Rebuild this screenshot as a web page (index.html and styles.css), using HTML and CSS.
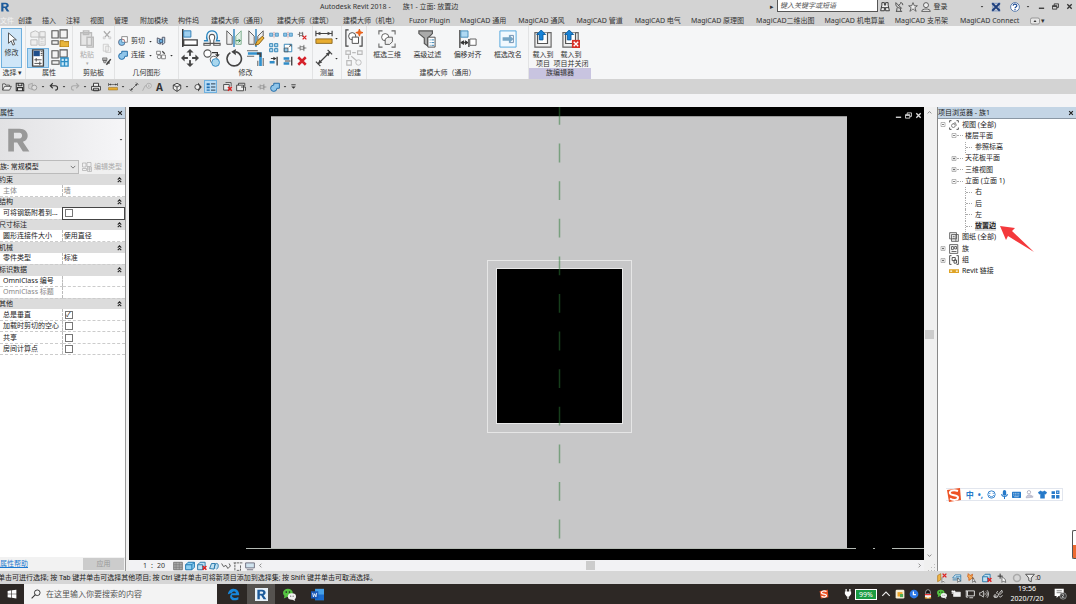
FILE: index.html
```html
<!DOCTYPE html>
<html>

  <head>
    <meta charset="utf-8">
    <title>Autodesk Revit 2018 - 族1 - 立面: 放置边</title>
    <link rel="stylesheet" href="styles.css">
  </head>

  <body>

    <!-- ******* Symbole ************************ -->
    <svg class="defs" aria-hidden="true">
      <symbol id="caret" viewBox="0 0 16 16"><path d="M4 6h8l-4 5z" fill="#333"/></symbol>
      <symbol id="down" viewBox="0 0 16 16"><path d="M2 5l6 6 6-6" fill="none" stroke="#555" stroke-width="2"/></symbol>
      <symbol id="close" viewBox="0 0 16 16"><path d="M3 3l10 10M13 3L3 13" fill="none" stroke="currentColor" stroke-width="3"/></symbol>
      <symbol id="restore" viewBox="0 0 16 16"><path d="M5 6V2h10v8h-4M1 6h10v8H1zM1 8h10" fill="none" stroke="currentColor" stroke-width="2"/></symbol>
      <symbol id="mini" viewBox="0 0 16 16"><path d="M2 12h12" stroke="currentColor" stroke-width="3"/></symbol>
      <symbol id="rlogo" viewBox="0 0 16 16"><path fill-rule="evenodd" d="M2 1h7c6 0 6.500 7 2 8l4 6h-4L7.500 9.500H5.500V15H2zM5.500 3.500v3.500H9c2 0 2-3.500 0-3.500z" fill="currentColor"/></symbol>

      <symbol id="cursor" viewBox="0 0 16 16"><path d="M4 1v12l3-3 2 5 2-1-2-5h4z" fill="#fff" stroke="#444"/></symbol>
      <symbol id="types" viewBox="0 0 20 20"><path d="M2 4l5-2 4 2v5H2zM12 3h6v6h-6zM2 12h7v6H2zM11 9h7v9h-7zM13 11h3M13 14h1M15 14h1M13 16h1M15 16h1" fill="#eee" stroke="#bbb"/></symbol>
      <symbol id="props" viewBox="0 0 20 20"><path d="M4 1h12v18H4z" fill="#fff" stroke="#444" stroke-width="1.500"/><path d="M5 2h7v6H5z" fill="#1e4f8c"/><path d="M13 3h2M13 5h2M13 7h2M6 12h8M6 16h8M8 10v4M12 14v4" stroke="#444"/></symbol>
      <symbol id="famtype" viewBox="0 0 20 20"><path d="M1 2h7v8H1zM10 1h8v9h-8zM1 13h7v4H1z" fill="#f3f3f3" stroke="#555" stroke-width="1.200"/><path d="M10 13h4l1 1h5v6H10z" fill="#e8b53c" stroke="#a87510"/></symbol>
      <symbol id="famcat" viewBox="0 0 20 20"><path d="M1 2h7v8H1zM10 1h8v8h-8zM1 13h8v4H1z" fill="#f3f3f3" stroke="#555" stroke-width="1.200"/><path d="M11 10h8v9h-8zM15 10v9M11 14h8" fill="#c9e8f7" stroke="#2b8cc4" stroke-width="1.500"/></symbol>
      <symbol id="paste" viewBox="0 0 20 20"><path d="M3 3h12v14H3zM6 1h6v4H6zM10 8h7v11h-7z" fill="#e6e6e6" stroke="#bbb" stroke-width="1.500"/></symbol>
      <symbol id="cut" viewBox="0 0 16 16"><path d="M3 2l8 9M13 2l-8 9" stroke="#aaa" stroke-width="2"/><path d="M2 11h3v3H2zM11 11h3v3h-3z" fill="none" stroke="#bbb"/></symbol>
      <symbol id="copy" viewBox="0 0 16 16"><path d="M2 2h8v11H2zM6 5h5l3 3v7H6z" fill="#f4f4f4" stroke="#bbb"/></symbol>
      <symbol id="brush" viewBox="0 0 16 16"><path d="M1 3h7v4H1zM2 7h5l-1 4H3z" fill="#bbb" stroke="#555"/><path d="M7 14l7-9M9 9l3 3" stroke="#444" stroke-width="2.500" fill="none"/></symbol>
      <symbol id="gcut" viewBox="0 0 16 16"><path d="M6 1h9v9h-5V6H6z" fill="#fff" stroke="#555"/><circle cx="6" cy="10" r="5" fill="#fff" stroke="#a44"/><path d="M6 5v5h5a5 5 0 1 1-5-5z" fill="#8fc5ea" stroke="#26638f"/></symbol>
      <symbol id="gjoin" viewBox="0 0 16 16"><path d="M6 2h9v8h-4a5 5 0 1 1-5-5z" fill="#8fc5ea" stroke="#1f6aa5" stroke-width="1.500"/></symbol>
      <symbol id="cope" viewBox="0 0 16 16"><path d="M2 3l5 2v8l-5-2zM10 2h4v9l-4 3z" fill="#b9dcf2" stroke="#445" stroke-width="1.300"/><circle cx="8" cy="8" r="3" fill="#6aaede" stroke="#235"/></symbol>
      <symbol id="demolish" viewBox="0 0 16 16"><path d="M1 2h6v5H1zM9 8h6v6H9z" fill="#fff" stroke="#444"/><circle cx="5" cy="11" r="3" fill="none" stroke="#444"/><path d="M10 2l4 4" stroke="#444" stroke-width="2"/></symbol>
      <symbol id="align" viewBox="0 0 20 20"><path d="M2 0v20" stroke="#222" stroke-width="1.500"/><path d="M3 2h8v7H3z" fill="#9fd0ef" stroke="#2b7cb4"/><path d="M3 12h15v6H3z" fill="#fff" stroke="#444" stroke-width="1.500"/></symbol>
      <symbol id="offset" viewBox="0 0 20 20"><path d="M1 13h4c-2-4-1-11 5-11s7 7 5 11h4" fill="none" stroke="#2b86c0" stroke-width="1.500"/><path d="M1 18h7v-5c-2-4-1-7 2-7s4 3 2 7v5h7v-2H1z" fill="#fff" stroke="#555" stroke-width="1.200"/></symbol>
      <symbol id="mirror1" viewBox="0 0 20 20"><path d="M2 2l6 6v9H2z" fill="#eee" stroke="#555"/><path d="M18 2l-6 6v9h6z" fill="#e4f2e9" stroke="#7a8"/><path d="M10 0v20" stroke="#227bb8" stroke-width="1.500"/><path d="M12 13h5M15 11l2 2-2 2" fill="none" stroke="#2a7a44"/></symbol>
      <symbol id="mirror2" viewBox="0 0 20 20"><path d="M2 2l6 6v9H2zM18 2l-6 6v5l6-5z" fill="#eee" stroke="#555"/><path d="M10 0v20" stroke="#227bb8" stroke-width="1.500"/><path d="M9 18l2-4 6-6 2 2-6 7z" fill="#ecb43a" stroke="#865a10"/></symbol>
      <symbol id="move" viewBox="0 0 20 20"><path d="M10 0l4 4h-3v5h5V6l4 4-4 4v-3h-5v5h3l-4 4-4-4h3v-5H4v3l-4-4 4-4v3h5V4H6z" fill="#444"/><circle cx="10" cy="10" r="2.500" fill="#f5f6f7"/></symbol>
      <symbol id="copyto" viewBox="0 0 20 20"><circle cx="5" cy="5" r="4" fill="#fff" stroke="#555" stroke-width="1.200"/><path d="M10 4h6v3M14 6l2 2 2-2" fill="none" stroke="#333" stroke-width="1.300"/><circle cx="12" cy="12" r="4" fill="#fff" stroke="#555"/><circle cx="14" cy="15" r="4.300" fill="#a9d7ee" stroke="#2b86c0"/></symbol>
      <symbol id="rotate" viewBox="0 0 20 20"><path d="M6 4a8 8 0 1 0 6-1" fill="none" stroke="#444" stroke-width="1.800"/><path d="M12 0v7L7 3z" fill="#444"/></symbol>
      <symbol id="trim" viewBox="0 0 20 20"><path d="M0 2h12M0 8h8M12 13v6M18 10v9" fill="none" stroke="#666" stroke-width="1.200"/><path d="M1 5h14v14" fill="none" stroke="#3192cf" stroke-width="3"/><path d="M11 5h4v4" fill="none" stroke="#444" stroke-width="2"/></symbol>
      <symbol id="split" viewBox="0 0 16 16"><path d="M1 5h5v5H1zM10 5h5v5h-5z" fill="#8cc6ea" stroke="#2277ad"/><path d="M8 3v10" stroke="#c77" stroke-width="1.300" stroke-dasharray="2 1"/></symbol>
      <symbol id="array" viewBox="0 0 16 16"><path d="M1 1h5v5H1zM9 1h5v5H9zM1 9h5v5H1zM9 9h5v5H9z" fill="#b5dcf3" stroke="#3083b5" stroke-width="1.500"/></symbol>
      <symbol id="scale" viewBox="0 0 16 16"><path d="M2 2h12v12H2z" fill="#fff" stroke="#3083b5" stroke-width="1.500"/><path d="M2 8h6v6H2z" fill="#8cc6ea" stroke="#333"/><path d="M9 7l4-4M10 3h3v3" stroke="#333" fill="none"/></symbol>
      <symbol id="extend" viewBox="0 0 16 16"><path d="M13 1v14" stroke="#333" stroke-width="2"/><path d="M1 10h8" stroke="#2f8cc8" stroke-width="4"/><path d="M3 4h5" stroke="#333" stroke-width="1.500"/><path d="M7 1l5 3-5 3z" fill="#333"/></symbol>
      <symbol id="extend2" viewBox="0 0 16 16"><path d="M14 1v14" stroke="#333" stroke-width="2"/><path d="M1 4h9M1 12h9" stroke="#2f8cc8" stroke-width="4"/><path d="M3 8h9" stroke="#333" stroke-width="1.500"/></symbol>
      <symbol id="pin" viewBox="0 0 16 16"><path d="M1 8h4M5 4v8M5 6h6v4H5M11 3v10M11 8h4" fill="none" stroke="#666" stroke-width="1.300"/></symbol>
      <symbol id="unpin" viewBox="0 0 16 16"><path d="M1 7h3M4 3v8M4 5h5v4H4M9 3v8" fill="none" stroke="#666" stroke-width="1.300"/><path d="M9 9l6 6M15 9l-6 6" stroke="#d22" stroke-width="2"/></symbol>
      <symbol id="del" viewBox="0 0 16 16"><path d="M2 2l12 12M14 2L2 14" stroke="#d5222b" stroke-width="4"/></symbol>
      <symbol id="meas" viewBox="0 0 20 20"><path d="M1 5h18M1 2v6M19 2v6" stroke="#444" stroke-width="1.300"/><path d="M2 5l4-2v4zM18 5l-4-2v4z" fill="#444"/><path d="M1 11h18v5H1z" fill="#e8ac2f" stroke="#8c681f"/></symbol>
      <symbol id="dim" viewBox="0 0 20 20"><path d="M3 17L17 3M1 14l5 5M14 1l5 5" stroke="#444" stroke-width="1.400"/><path d="M3 17l2-5 3 3zM17 3l-2 5-3-3z" fill="#444"/></symbol>
      <symbol id="create" viewBox="0 0 20 20"><path d="M4 1H1v18h3M16 19h3V8" fill="none" stroke="#444" stroke-width="1.300"/><circle cx="8" cy="8" r="4" fill="#fff" stroke="#444"/><path d="M8 9h7v7H8z" fill="#fff" stroke="#444"/><path d="M16 0l1 3 3 1-3 1-1 3-1-3-3-1 3-1z" fill="#f06a1d" stroke="#e55812"/></symbol>
      <symbol id="creategrp" viewBox="0 0 20 20"><path d="M1 2h5v4H1zM14 2h5v4h-5zM2 13h5v5H2zM8 4h4M4 7v4M7 8l6 5" fill="none" stroke="#bbb" stroke-width="1.300"/><circle cx="15" cy="15" r="3" fill="none" stroke="#bbb"/></symbol>
      <symbol id="box3d" viewBox="0 0 20 20"><path d="M1 5V1h4M15 1h4v4M19 15v4h-4M5 19H1v-4" fill="none" stroke="#666" stroke-width="1.200"/><circle cx="8" cy="8" r="4" fill="#fff" stroke="#555"/><path d="M8 10l3-2h5v5l-3 3H8z" fill="#eee" stroke="#555"/></symbol>
      <symbol id="filter" viewBox="0 0 20 20"><path d="M1 1h15v3l-5 5v9l-4-3V9L1 4z" fill="#aaa" stroke="#555" stroke-width="1.300"/><path d="M11 8h8v11h-8z" fill="#fff" stroke="#444"/><path d="M13 11h1M15 11h3M13 14h1M15 14h3M13 17h1M15 17h3" stroke="#2677ab"/></symbol>
      <symbol id="shift" viewBox="0 0 20 20"><path d="M1 0v20M11 10v9" stroke="#333" stroke-width="1.400"/><path d="M2 1h8v7H2z" fill="#afd9f3" stroke="#3d88b7"/><path d="M12 10h7v7h-7z" fill="#fff" stroke="#555"/><path d="M2 14h8M2 14l3-2v4zM10 14l-3-2v4z" stroke="#333" fill="#333"/></symbol>
      <symbol id="rename" viewBox="0 0 20 20"><path d="M1 1h18v18H1z" fill="#f2f9fe" stroke="#4aa3dc"/><path d="M4 8h7V5l5 5-5 5v-3H4z" fill="#76a5c5"/><path d="M12 6h4v8h-4" fill="none" stroke="#68a"/></symbol>
      <symbol id="load" viewBox="0 0 20 20"><path d="M1 3h18v16H1z" fill="#eee" stroke="#666" stroke-width="1.300"/><path d="M4 3v12h11V3" fill="#fff" stroke="#555" stroke-width="1.300"/><path d="M8 0l5 5h-3v6H6V5H3z" fill="#1783d8" stroke="#0b5c9e"/></symbol>
      <symbol id="loadx" viewBox="0 0 20 20"><path d="M1 3h17v16H1z" fill="#eee" stroke="#666" stroke-width="1.300"/><path d="M4 3v12h11V3" fill="#fff" stroke="#555" stroke-width="1.300"/><path d="M8 0l5 5h-3v6H6V5H3z" fill="#1783d8" stroke="#0b5c9e"/><path d="M11 11h9v9h-9z" fill="#d63027"/><path d="M13 13l5 5M18 13l-5 5" stroke="#fff" stroke-width="1.500"/></symbol>

      <symbol id="open" viewBox="0 0 16 16"><path d="M1 13V3h4l1 2h6v2M1 13l3-6h11l-3 6z" fill="#eee" stroke="#444" stroke-width="1.300"/></symbol>
      <symbol id="save" viewBox="0 0 16 16"><path d="M2 2h11l1 2v10H2zM5 2v4h6V2M4 14V9h8v5" fill="#eee" stroke="#333" stroke-width="1.700"/></symbol>
      <symbol id="sync" viewBox="0 0 16 16"><path d="M1 4l6-2v10l-6-2z" fill="#ccc" stroke="#999"/><circle cx="10" cy="9" r="4" fill="#ddd" stroke="#999" stroke-width="1.500"/></symbol>
      <symbol id="undo" viewBox="0 0 16 16"><path d="M6 2L2 6l4 4M2 6h8c5 0 5 7 0 7" fill="none" stroke="currentColor" stroke-width="1.700"/></symbol>
      <symbol id="redo" viewBox="0 0 16 16"><path d="M10 2l4 4-4 4M14 6H6c-5 0-5 7 0 7" fill="none" stroke="currentColor" stroke-width="1.700"/></symbol>
      <symbol id="print" viewBox="0 0 16 16"><path d="M4 7V2h8v5M1 7h14v6H1zM4 10h8v4H4z" fill="#f3f3f3" stroke="#333" stroke-width="1.500"/></symbol>
      <symbol id="tag" viewBox="0 0 16 16"><path d="M1 14l4-8h4" fill="none" stroke="#999"/><circle cx="11" cy="6" r="4" fill="#ddd" stroke="#999"/><path d="M11 4v4" stroke="#888"/></symbol>
      <symbol id="house" viewBox="0 0 16 16"><path d="M2 5l6-3 6 3v6l-6 4-6-4zM8 8v7M2 5l6 3 6-3" fill="#eee" stroke="#333" stroke-width="1.400"/></symbol>
      <symbol id="section" viewBox="0 0 16 16"><path d="M8 1l6 7-6 7" fill="#333"/><circle cx="7" cy="8" r="4" fill="#eee" stroke="#333" stroke-width="1.300"/></symbol>
      <symbol id="thin" viewBox="0 0 16 16"><path d="M1 2h5v3H1zM1 7h5v3H1zM1 12h5v2H1z" fill="#1f6fb2"/><path d="M8 3h7M8 8h7M8 13h7" stroke="#234" stroke-width="1.500"/></symbol>
      <symbol id="closewin" viewBox="0 0 16 16"><path d="M4 1h9v6M1 4h9v9H1z" fill="#eee" stroke="#444" stroke-width="1.400"/><path d="M8 8l6 6M14 8l-6 6" stroke="#d22" stroke-width="2.300"/></symbol>
      <symbol id="wins" viewBox="0 0 16 16"><path d="M4 5V2h10v5M1 5h11v9H1zM8 8h7v6" fill="#eee" stroke="#444" stroke-width="1.500"/></symbol>
      <symbol id="custom" viewBox="0 0 16 16"><path d="M3 4h10" stroke="#333" stroke-width="2"/><path d="M3 8h10l-5 5z" fill="#333"/></symbol>

      <symbol id="bino" viewBox="0 0 16 16"><path d="M3 1h4v4l2 0V1h4v4l2 9H9V9H7v5H1l2-9zM2 9h5M9 9h5" fill="#eee" stroke="#333" stroke-width="1.500"/></symbol>
      <symbol id="dish" viewBox="0 0 16 16"><path d="M3 1c-1 6 3 9 9 9zM7 6l4-4M3 15h10M5 9l-1 6M10 10l1 5M10 1c3 0 4 1 4 4" fill="none" stroke="#444" stroke-width="1.400"/></symbol>
      <symbol id="star" viewBox="0 0 16 16"><path d="M8 1l2 5h5l-4 3 2 6-5-4-5 4 2-6-4-3h5z" fill="#eee" stroke="#444" stroke-width="1.200"/></symbol>
      <symbol id="person" viewBox="0 0 16 16"><circle cx="8" cy="5" r="4" fill="#eee" stroke="#444" stroke-width="1.300"/><path d="M1 15c0-5 14-5 14 0z" fill="#eee" stroke="#444" stroke-width="1.300"/></symbol>
      <symbol id="exch" viewBox="0 0 16 16"><path d="M1 2h14M1 14h14M3 2v12M13 2v12" stroke="#8fa4c8" stroke-width="2"/><path d="M2 2l12 12M14 2L2 14" stroke="#1e3f7c" stroke-width="3"/></symbol>
      <symbol id="help" viewBox="0 0 16 16"><circle cx="8" cy="8" r="7" fill="#fff" stroke="#335e9c" stroke-width="1.200"/><path d="M5 6c0-4 6-3 6 0 0 2-3 2-3 4M8 11v2" fill="none" stroke="#1d4b94" stroke-width="1.800"/></symbol>
      <symbol id="min" viewBox="0 0 20 16"><rect x="1" y="2" width="18" height="12" rx="3" fill="#e6e6e6" stroke="#555"/><path d="M7 10l3-4 3 4z" fill="#333"/></symbol>

      <symbol id="views" viewBox="0 0 16 16"><path d="M1 4V1h3M12 1h3v3M15 12v3h-3M4 15H1v-3" fill="none" stroke="#444" stroke-width="1.400"/><circle cx="7" cy="9" r="3" fill="none" stroke="#444"/><path d="M7 6l3-2 2 5" fill="none" stroke="#444"/></symbol>
      <symbol id="sheets" viewBox="0 0 16 16"><path d="M1 1h11v10H1zM4 4h11v11H4zM11 4v11M6 7h3M6 10h3" fill="#eee" stroke="#555" stroke-width="1.300"/></symbol>
      <symbol id="fam" viewBox="0 0 16 16"><path d="M1 1h13v14H1zM4 4h3v5H4zM9 4h3v4H9zM4 12h8" fill="#fff" stroke="#555" stroke-width="1.400"/></symbol>
      <symbol id="grp" viewBox="0 0 16 16"><path d="M4 1H1v14h3M12 1h3v14h-3M5 4h5v5H5zM8 8h4v5H8z" fill="none" stroke="#444" stroke-width="1.400"/></symbol>
      <symbol id="link" viewBox="0 0 16 16"><path d="M1 6h6v4H1zM9 6h6v4H9zM5 8h6" fill="none" stroke="#dfa425" stroke-width="2"/></symbol>
      <symbol id="plus" viewBox="0 0 9 9"><path d="M1.500 1.500h6v6h-6z" fill="#fff" stroke="#999"/><path d="M3 4.500h3M4.500 3v3" stroke="#444"/></symbol>
      <symbol id="minus" viewBox="0 0 9 9"><path d="M1.500 1.500h6v6h-6z" fill="#fff" stroke="#999"/><path d="M3 4.500h3" stroke="#444"/></symbol>
      <symbol id="collapse" viewBox="0 0 16 16"><path d="M4 7l4-4 4 4M4 13l4-4 4 4" fill="none" stroke="#222" stroke-width="2.500"/></symbol>

      <symbol id="detail" viewBox="0 0 16 16"><path d="M1 2h14v12H1z" fill="#aaa" stroke="#555"/><path d="M1 6h14M1 10h14M5 2v12M10 2v12" stroke="#777"/></symbol>
      <symbol id="cube" viewBox="0 0 16 16"><path d="M1 6l4-4h10v8l-4 4H1zM1 6h10v8M11 6l4-4" fill="#8fd0f2" stroke="#1b75b0" stroke-width="1.500"/></symbol>
      <symbol id="cubex" viewBox="0 0 16 16"><path d="M1 6l4-4h8v8l-4 4H1zM1 6h8v8" fill="#bfe0f2" stroke="#2878aa" stroke-width="1.500"/><path d="M9 8l6 6M15 8l-6 6" stroke="#d22" stroke-width="2.500"/></symbol>
      <symbol id="shadow" viewBox="0 0 16 16"><path d="M1 12l3-8h6l-2 9zM9 12c-1-4 1-9 4-8s2 8-1 9" fill="#bfe0f2" stroke="#2878aa" stroke-width="1.500"/></symbol>
      <symbol id="glasses" viewBox="0 0 16 16"><path d="M1 4l3 5 4-2 3 5 4-4-2-4" fill="none" stroke="#555" stroke-width="1.500"/></symbol>
      <symbol id="crop" viewBox="0 0 16 16"><path d="M3 15V3h12M1 3h2M12 7v8H5" fill="none" stroke="#555" stroke-width="1.400" stroke-dasharray="4 1"/></symbol>
      <symbol id="screen" viewBox="0 0 16 16"><path d="M1 3h14v8H1zM3 14h10" fill="#cfe2ee" stroke="#667" stroke-width="1.400"/></symbol>
      <symbol id="selx" viewBox="0 0 16 16"><path d="M1 4l5-3v10l-5 3z" fill="#f0b646" stroke="#a66f13"/><path d="M8 7v8l2-2 2 2" fill="#fff" stroke="#444"/><path d="M9 1l6 6M15 1L9 7" stroke="#d22" stroke-width="2.200"/></symbol>
      <symbol id="sel2" viewBox="0 0 16 16"><path d="M1 8l4-5h9v10h-3V8H1zM6 6h8M1 11h8" fill="#e2f1fa" stroke="#2878aa" stroke-width="1.300"/><path d="M9 8v7l2-2h3z" fill="#fff" stroke="#444"/></symbol>
      <symbol id="sel3" viewBox="0 0 16 16"><path d="M2 1l3 3 4-2-1 4 3 3H7l-4 3V8L1 6z" fill="#f4aa57" stroke="#cd5e18" stroke-width="1.300"/><path d="M9 7v8l2-2 3 2z" fill="#fff" stroke="#444"/></symbol>
      <symbol id="drag" viewBox="0 0 16 16"><path d="M5 1v8M1 5h8" stroke="#333" stroke-width="1.600"/><path d="M8 6v9l2-2 4 2-1-5z" fill="#fff" stroke="#333"/></symbol>
      <symbol id="ring" viewBox="0 0 16 16"><circle cx="8" cy="8" r="5.500" fill="none" stroke="#aaa" stroke-width="2.500"/></symbol>
      <symbol id="funnel" viewBox="0 0 16 16"><path d="M1 2h14L10 8v6l-4-2V8z" fill="#eee" stroke="#444" stroke-width="1.400"/></symbol>

      <symbol id="win" viewBox="0 0 16 16"><path d="M1 3l6-1v5.500H1zM8 2l7-1v6.500H8zM1 8.500h6V14l-6-1zM8 8.500h7V15l-7-1z" fill="#fff"/></symbol>
      <symbol id="search" viewBox="0 0 16 16"><circle cx="10" cy="6" r="4.500" fill="none" stroke="#333" stroke-width="1.500"/><path d="M7 9l-6 6" stroke="#333" stroke-width="1.800"/></symbol>
      <symbol id="edge" viewBox="0 0 16 16"><path d="M1 8C2 2 6 1 8 1c5 0 7 4 7 8H6c0 4 5 4 8 2v3C5 18 1 11 6 6c-2 .5-4 1-5 2zM6 6.500h5C11 3.500 6.500 3.500 6 6.500z" fill="#1887dc"/></symbol>
      <symbol id="wechat" viewBox="0 0 16 16"><ellipse cx="6" cy="6" rx="6" ry="5" fill="#55c341"/><path d="M2 9l-1 4 4-2z" fill="#55c341"/><circle cx="4" cy="5" r="1" fill="#222"/><circle cx="8" cy="5" r="1" fill="#222"/><ellipse cx="11" cy="10.500" rx="5" ry="4" fill="#f0f0f0"/><path d="M14 13l1 3-4-2z" fill="#f0f0f0"/><circle cx="9.500" cy="10" r=".7" fill="#555"/><circle cx="12.500" cy="10" r=".7" fill="#555"/></symbol>
      <symbol id="word" viewBox="0 0 16 16"><path d="M5 1h11v14H5z" fill="#46a0e8"/><path d="M5 8h11v7H5z" fill="#1a6cce"/><path d="M0 4h9v9H0z" fill="#1a58b8"/><path d="M2 6l1 5 1.500-4L6 11l1-5" fill="none" stroke="#fff"/></symbol>
      <symbol id="sogou" viewBox="0 0 16 16"><path d="M1 3l13-2 1 12-12 2z" fill="#ee5325"/><path d="M12 4C7 2 3 4 4 6.500s8 1 8 4-5 3-8 1" fill="none" stroke="#fff" stroke-width="2"/></symbol>
      <symbol id="plug" viewBox="0 0 16 16"><path d="M5 0v5M11 0v5M8 11v5" stroke="#fff" stroke-width="2"/><path d="M3 4h10v4l-3 4H6L3 8z" fill="#fff"/></symbol>
      <symbol id="up" viewBox="0 0 16 16"><path d="M2 11l6-6 6 6" fill="none" stroke="#eee" stroke-width="1.800"/></symbol>
      <symbol id="note" viewBox="0 0 16 16"><rect x="1" y="1" width="14" height="14" rx="2" fill="#f6eed8"/><path d="M4 5h8v7H4z" fill="#eca72e"/><path d="M8 8h5v5H8z" fill="#4fac56"/></symbol>
      <symbol id="ludun" viewBox="0 0 16 16"><circle cx="8" cy="8" r="7" fill="#2d78e6"/><path d="M7 4v5h4" fill="none" stroke="#fff" stroke-width="2"/></symbol>
      <symbol id="qq" viewBox="0 0 16 16"><ellipse cx="8" cy="6" rx="4" ry="5" fill="#111" stroke="#ddd"/><ellipse cx="8" cy="11" rx="5" ry="4" fill="#f4f4f4"/><path d="M3 8h10v2H3z" fill="#e33"/><path d="M3 14h4M9 14h4" stroke="#f3a51c" stroke-width="2"/></symbol>
      <symbol id="power" viewBox="0 0 16 16"><path d="M4 5h11v7H4z" fill="#eee" stroke="#eee"/><path d="M1 4h6M2 2v6M5 2v4" stroke="#fff" stroke-width="1.500"/></symbol>
      <symbol id="net" viewBox="0 0 16 16"><path d="M4 3h11v8H4zM7 14h6M1 3h3M2 3v10h3" fill="none" stroke="#eee" stroke-width="1.400"/></symbol>
      <symbol id="vol" viewBox="0 0 16 16"><path d="M1 6h2l4-3v10L3 10H1zM9 6c1 1 1 3 0 4M11 4c3 2 3 6 0 8M13 2c3 3 3 9 0 12" fill="none" stroke="#ddd" stroke-width="1.300"/></symbol>
      <symbol id="pen" viewBox="0 0 16 16"><path d="M1 12c4 5 5-4 2-3s0 6 4 4l2-5 5-6 1 3-5 5M7 8c-2-2-1-4 1-4M10 12c2 2 4 0 5-2" fill="none" stroke="#eee" stroke-width="1.300"/></symbol>
      <symbol id="msg" viewBox="0 0 20 18"><path d="M1 1h14v11H7l-3 3v-3H1z" fill="#fff"/><path d="M4 4h8M4 7h8" stroke="#444"/><circle cx="14" cy="12" r="5" fill="#333" stroke="#bbb"/><path d="M12 11c0-3 4-2 3 0l-3 3h4" fill="none" stroke="#fff"/></symbol>

      <symbol id="smile" viewBox="0 0 16 16"><circle cx="8" cy="8" r="6.500" fill="none" stroke="#2579c9" stroke-width="1.600"/><path d="M5 5v2M11 5v2M4 9c2 4 6 4 8 0" fill="none" stroke="#2579c9" stroke-width="1.600"/></symbol>
      <symbol id="mic" viewBox="0 0 16 16"><rect x="5" y="0" width="6" height="10" rx="3" fill="#2579c9"/><path d="M3 7c0 6 10 6 10 0M8 12v4" fill="none" stroke="#2579c9" stroke-width="1.800"/></symbol>
      <symbol id="keyb" viewBox="0 0 16 16"><rect x="0" y="3" width="16" height="11" rx="1" fill="#2579c9"/><path d="M2 6h12M2 9h12" stroke="#fff" stroke-dasharray="2 1"/><path d="M4 12h8" stroke="#fff"/></symbol>
      <symbol id="user" viewBox="0 0 16 16"><circle cx="7" cy="4" r="3" fill="none" stroke="#aab" stroke-width="1.500"/><path d="M2 14c0-7 10-7 12-1zM9 11h6" fill="#ccd" stroke="#aab"/></symbol>
      <symbol id="shirt" viewBox="0 0 16 16"><path d="M5 1c1 2 5 2 6 0l5 3-2 4-2-1v8H4V7L2 8 0 4z" fill="#2579c9"/></symbol>
      <symbol id="tools" viewBox="0 0 16 16"><path d="M1 2h6v5H1zM1 9h6v6H1zM9 9h6v6H9z" fill="#2579c9"/><path d="M10 2h4v4h-4z" fill="none" stroke="#2579c9" stroke-width="2"/></symbol>
    </svg>

    <!-- ******* Titelleiste ************************ -->
    <header class="titlebar">
      <svg class="logo"><use href="#rlogo"/></svg>
      <h1 class="apptitle"><span>Autodesk Revit 2018 -</span><span>族1 - 立面: 放置边</span></h1>
      <span class="tri">▸</span>
      <input type="text" class="keyword" placeholder="键入关键字或短语" aria-label="搜索">
      <div class="account">
        <button class="tool"><svg><use href="#bino"/></svg></button>
        <button class="tool"><svg><use href="#dish"/></svg></button>
        <button class="tool"><svg><use href="#star"/></svg></button>
        <button class="tool login"><svg><use href="#person"/></svg>登录</button>
      </div>
      <div class="account">
        <svg class="dd"><use href="#caret"/></svg>
        <button class="tool"><svg><use href="#exch"/></svg></button>
        <button class="tool"><svg><use href="#help"/></svg></button>
        <svg class="dd"><use href="#caret"/></svg>
      </div>
      <div class="winbtns">
        <button class="tool"><svg><use href="#mini"/></svg></button>
        <button class="tool"><svg><use href="#restore"/></svg></button>
        <button class="tool"><svg><use href="#close"/></svg></button>
      </div>
    </header>

    <nav class="tabs">
      <a href="#" class="file">文件</a>
      <a href="#">创建</a>
      <a href="#">插入</a>
      <a href="#">注释</a>
      <a href="#">视图</a>
      <a href="#">管理</a>
      <a href="#" class="wide">附加模块</a>
      <a href="#">构件坞</a>
      <a href="#" class="wide">建模大师（通用）</a>
      <a href="#">建模大师（建筑）</a>
      <a href="#">建模大师（机电）</a>
      <a href="#">Fuzor Plugin</a>
      <a href="#">MagiCAD 通用</a>
      <a href="#" class="wide">MagiCAD 通风</a>
      <a href="#" class="wide">MagiCAD 管道</a>
      <a href="#" class="wide">MagiCAD 电气</a>
      <a href="#">MagiCAD 原理图</a>
      <a href="#" class="wide">MagiCAD二维出图</a>
      <a href="#">MagiCAD 机电算量</a>
      <a href="#">MagiCAD 支吊架</a>
      <a href="#" class="wide">MagiCAD Connect</a>
      <button class="minrib"><svg><use href="#min"/></svg>▾</button>
    </nav>

    <!-- ******* Ribbon ************************ -->
    <section class="ribbon">
      <div class="group g-select">
        <div class="tools"><button class="big on"><svg><use href="#cursor"/></svg>修改</button></div>
        <h2>选择 ▾</h2>
      </div>
      <div class="group g-props">
        <div class="tools grid2">
          <button><svg><use href="#types"/></svg></button>
          <button><svg><use href="#famtype"/></svg></button>
          <button class="on"><svg><use href="#props"/></svg></button>
          <button><svg><use href="#famcat"/></svg></button>
        </div>
        <h2>属性</h2>
      </div>
      <div class="group g-clip">
        <div class="tools">
          <button class="big off"><svg><use href="#paste"/></svg>粘贴<span>▾</span></button>
          <div class="small col1">
            <button><svg><use href="#cut"/></svg></button>
            <button><svg><use href="#copy"/></svg></button>
            <button><svg><use href="#brush"/></svg></button>
          </div>
        </div>
        <h2>剪贴板</h2>
      </div>
      <div class="group g-geo">
        <div class="tools geo">
          <div class="line">
            <button><svg><use href="#gcut"/></svg>剪切</button><svg class="dd"><use href="#caret"/></svg>
            <button><svg><use href="#cope"/></svg></button>
          </div>
          <div class="line">
            <button><svg><use href="#gjoin"/></svg>连接</button><svg class="dd"><use href="#caret"/></svg>
            <button><svg><use href="#demolish"/></svg></button><svg class="dd"><use href="#caret"/></svg>
          </div>
        </div>
        <h2>几何图形</h2>
      </div>
      <div class="group g-mod">
        <div class="tools">
          <div class="grid4">
            <button><svg><use href="#align"/></svg></button>
            <button><svg><use href="#offset"/></svg></button>
            <button><svg><use href="#mirror1"/></svg></button>
            <button><svg><use href="#mirror2"/></svg></button>
            <button><svg><use href="#move"/></svg></button>
            <button><svg><use href="#copyto"/></svg></button>
            <button><svg><use href="#rotate"/></svg></button>
            <button><svg><use href="#trim"/></svg></button>
          </div>
          <div class="small col3">
            <button><svg><use href="#split"/></svg></button>
            <button><svg><use href="#split"/></svg></button>
            <button><svg><use href="#unpin"/></svg></button>
            <button><svg><use href="#array"/></svg></button>
            <button><svg><use href="#scale"/></svg></button>
            <button><svg><use href="#pin"/></svg></button>
            <button><svg><use href="#extend"/></svg></button>
            <button><svg><use href="#extend2"/></svg></button>
            <button><svg><use href="#del"/></svg></button>
          </div>
        </div>
        <h2>修改</h2>
      </div>
      <div class="group g-meas">
        <div class="tools stack">
          <div class="line"><button><svg><use href="#meas"/></svg></button><svg class="dd"><use href="#caret"/></svg></div>
          <div class="line"><button><svg><use href="#dim"/></svg></button><svg class="dd"><use href="#caret"/></svg></div>
        </div>
        <h2>测量</h2>
      </div>
      <div class="group g-new">
        <div class="tools stack">
          <button><svg><use href="#create"/></svg></button>
          <button><svg><use href="#creategrp"/></svg></button>
        </div>
        <h2>创建</h2>
      </div>
      <div class="group g-master">
        <div class="tools even">
          <button class="big"><svg><use href="#box3d"/></svg>框选三维</button>
          <button class="big"><svg><use href="#filter"/></svg>高级过滤</button>
          <button class="big"><svg><use href="#shift"/></svg>偏移对齐</button>
          <button class="big"><svg><use href="#rename"/></svg>框选改名</button>
        </div>
        <h2>建模大师（通用）</h2>
      </div>
      <div class="group g-fam">
        <div class="tools">
          <button class="big"><svg><use href="#load"/></svg>载入到<br>项目</button>
          <button class="big"><svg><use href="#loadx"/></svg>载入到<br>项目并关闭</button>
        </div>
        <h2 class="lila">族编辑器</h2>
      </div>
    </section>

    <!-- ******* Schnellzugriff ************************ -->
    <div class="quick">
      <button><svg><use href="#open"/></svg></button>
      <button><svg><use href="#save"/></svg></button>
      <button><svg><use href="#sync"/></svg></button>
      <svg class="dd"><use href="#caret"/></svg>
      <button><svg><use href="#undo"/></svg></button>
      <svg class="dd"><use href="#caret"/></svg>
      <button class="off"><svg><use href="#redo"/></svg></button>
      <svg class="dd"><use href="#caret"/></svg>
      <button><svg><use href="#print"/></svg></button>
      <i></i>
      <button><svg><use href="#meas"/></svg></button>
      <svg class="dd"><use href="#caret"/></svg>
      <button><svg><use href="#dim"/></svg></button>
      <button><svg><use href="#tag"/></svg></button>
      <button class="text">A</button>
      <i></i>
      <button><svg><use href="#house"/></svg></button>
      <svg class="dd"><use href="#caret"/></svg>
      <button><svg><use href="#section"/></svg></button>
      <button class="on"><svg><use href="#thin"/></svg></button>
      <i></i>
      <button><svg><use href="#closewin"/></svg></button>
      <button><svg><use href="#wins"/></svg></button>
      <svg class="dd"><use href="#caret"/></svg>
      <button class="faint"><svg><use href="#pin"/></svg></button>
      <button><svg><use href="#gjoin"/></svg></button>
      <svg class="dd"><use href="#caret"/></svg>
      <button class="more"><svg><use href="#custom"/></svg></button>
    </div>

    <!-- ******* Arbeitsbereich ************************ -->
    <main class="work">

      <aside class="props">
        <h3 class="head">属性<button><svg><use href="#close"/></svg></button></h3>
        <div class="preview"><svg class="bigr"><use href="#rlogo"/></svg><svg class="dd"><use href="#caret"/></svg></div>
        <div class="typerow">
          <div class="combo">
            <select aria-label="族"><option>族: 常规模型</option></select>
            <svg><use href="#down"/></svg>
          </div>
          <button disabled><svg><use href="#famcat"/></svg>编辑类型</button>
        </div>
        <table class="list">
          <tr class="cat"><th colspan="2">约束<svg><use href="#collapse"/></svg></th></tr>
          <tr class="dim"><td>主体</td><td>墙</td></tr>
          <tr class="cat"><th colspan="2">结构<svg><use href="#collapse"/></svg></th></tr>
          <tr><td><label for="c1">可将钢筋附着到...</label></td><td class="focus"><input type="checkbox" id="c1"></td></tr>
          <tr class="cat"><th colspan="2">尺寸标注<svg><use href="#collapse"/></svg></th></tr>
          <tr><td>圆形连接件大小</td><td>使用直径</td></tr>
          <tr class="cat"><th colspan="2">机械<svg><use href="#collapse"/></svg></th></tr>
          <tr><td>零件类型</td><td>标准</td></tr>
          <tr class="cat"><th colspan="2">标识数据<svg><use href="#collapse"/></svg></th></tr>
          <tr><td>OmniClass 编号</td><td></td></tr>
          <tr class="dim"><td>OmniClass 标题</td><td></td></tr>
          <tr class="cat"><th colspan="2">其他<svg><use href="#collapse"/></svg></th></tr>
          <tr><td><label for="c2">总是垂直</label></td><td><input type="checkbox" id="c2" checked></td></tr>
          <tr><td><label for="c3">加载时剪切的空心</label></td><td><input type="checkbox" id="c3"></td></tr>
          <tr><td><label for="c4">共享</label></td><td><input type="checkbox" id="c4"></td></tr>
          <tr><td><label for="c5">房间计算点</label></td><td><input type="checkbox" id="c5"></td></tr>
        </table>
        <div class="foot"><a href="#">属性帮助</a><button disabled>应用</button></div>
      </aside>

      <section class="view">
        <div class="canvas">
          <svg class="drawing" viewBox="0 0 795 453" preserveAspectRatio="xMidYMid slice">
            <rect x="142" y="9" width="576" height="432" fill="#c7c7c8"/>
            <path d="M142 9.500h576" stroke="#999"/>
            <rect x="367.500" y="161.500" width="126" height="155" fill="#000" stroke="#e9e9e9"/>
            <rect x="358.500" y="153.500" width="144" height="172" fill="none" stroke="#e6e6e6"/>
            <path d="M117 441.500h610M744 441.500h2M763 441.500h32" stroke="#b4bab4"/>
            <!-- Mittelachse -->
            <path d="M430.500 -1V441" stroke="#2c7a35" stroke-opacity=".5" stroke-width="1.500" stroke-dasharray="18.800"/>
          </svg>
          <div class="mdi">
            <button><svg><use href="#mini"/></svg></button>
            <button><svg><use href="#restore"/></svg></button>
            <button><svg><use href="#close"/></svg></button>
          </div>
        </div>
        <div class="vscroll"><svg class="flip"><use href="#down"/></svg><b></b><svg><use href="#down"/></svg></div>
        <div class="viewbar">
          <span class="ratio"><span>1</span><span>:</span><span>20</span></span>
          <button><svg><use href="#detail"/></svg></button>
          <button><svg><use href="#cube"/></svg></button>
          <button><svg><use href="#cubex"/></svg></button>
          <button><svg><use href="#shadow"/></svg></button>
          <button><svg><use href="#glasses"/></svg></button>
          <button><svg><use href="#crop"/></svg></button>
          <button><svg><use href="#screen"/></svg></button>
          <div class="hscroll"><svg class="left"><use href="#down"/></svg><b></b><svg class="right"><use href="#down"/></svg></div>
        </div>
        <div class="grip"></div>
      </section>

      <aside class="browser">
        <h3 class="head">项目浏览器 - 族1<button><svg><use href="#close"/></svg></button></h3>
        <ul class="tree">
          <li><svg class="box"><use href="#minus"/></svg><svg><use href="#views"/></svg>视图 (全部)</li>
          <li class="l2"><svg class="box"><use href="#minus"/></svg><s></s>楼层平面</li>
          <li class="l3"><s></s>参照标高</li>
          <li class="l2"><svg class="box"><use href="#plus"/></svg><s></s>天花板平面</li>
          <li class="l2"><svg class="box"><use href="#plus"/></svg><s></s>三维视图</li>
          <li class="l2"><svg class="box"><use href="#minus"/></svg><s></s>立面 (立面 1)</li>
          <li class="l3"><s></s>右</li>
          <li class="l3"><s></s>后</li>
          <li class="l3"><s></s>左</li>
          <li class="l3"><s></s><strong>放置边</strong></li>
          <li class="leaf"><svg><use href="#sheets"/></svg>图纸 (全部)</li>
          <li><svg class="box"><use href="#plus"/></svg><svg><use href="#fam"/></svg>族</li>
          <li><svg class="box"><use href="#plus"/></svg><svg><use href="#grp"/></svg>组</li>
          <li class="leaf"><svg><use href="#link"/></svg>Revit 链接</li>
        </ul>
        <svg class="arrow" viewBox="0 0 34 26"><path d="M0 0l15 2-3 3 22 21L8 10l-2 4z" fill="#f4393c"/></svg>
        <div class="ime">
          <svg class="s"><use href="#sogou"/></svg>
          <span>中</span><span>•,</span>
          <svg><use href="#smile"/></svg><svg><use href="#mic"/></svg><svg><use href="#keyb"/></svg>
          <svg><use href="#user"/></svg><svg><use href="#shirt"/></svg><svg><use href="#tools"/></svg>
        </div>
        <div class="meter"></div>
      </aside>
    </main>

    <footer class="status">
      <p>单击可进行选择; 按 Tab 键并单击可选择其他项目; 按 Ctrl 键并单击可将新项目添加到选择集; 按 Shift 键并单击可取消选择。</p>
      <button><svg><use href="#selx"/></svg></button>
      <button><svg><use href="#sel2"/></svg></button>
      <button><svg><use href="#sel3"/></svg></button>
      <button><svg><use href="#cubex"/></svg></button>
      <button><svg><use href="#drag"/></svg></button>
      <button><svg><use href="#ring"/></svg></button>
      <button class="count"><svg><use href="#funnel"/></svg>:0</button>
    </footer>

    <!-- ******* Taskleiste ************************ -->
    <div class="taskbar">
      <button class="start"><svg><use href="#win"/></svg></button>
      <div class="find"><svg><use href="#search"/></svg><input type="text" placeholder="在这里输入你要搜索的内容" aria-label="搜索"></div>
      <button class="app"><svg><use href="#edge"/></svg></button>
      <button class="app active"><svg class="tile"><use href="#rlogo"/></svg></button>
      <button class="app"><svg><use href="#wechat"/></svg></button>
      <button class="app"><svg><use href="#word"/></svg></button>
      <div class="tray">
        <svg class="sg"><use href="#sogou"/></svg>
        <svg class="pl"><use href="#plug"/></svg>
        <span class="battery">99%</span>
        <svg><use href="#up"/></svg>
        <svg><use href="#note"/></svg>
        <svg><use href="#ludun"/></svg>
        <svg><use href="#qq"/></svg>
        <svg><use href="#wechat"/></svg>
        <svg><use href="#power"/></svg>
        <svg><use href="#net"/></svg>
        <svg><use href="#vol"/></svg>
        <svg><use href="#pen"/></svg>
        <div class="clock">19:56<br>2020/7/20</div>
        <svg class="msg"><use href="#msg"/></svg>
      </div>
    </div>

  </body>

</html>
```
FILE: styles.css
```css
* {
    box-sizing: border-box;
    }

body {
    margin: 0;
    height: 100vh;
    display: flex;
    flex-direction: column;
    overflow: hidden;
    background-color: #f4f4f6;
    color: #333;
    font-family: "Noto Sans", "Noto Sans CJK SC", sans-serif;
    font-size: 7px;
    line-height: 10px;
    white-space: nowrap;
    }

button, input, select {
    font: inherit;
    color: inherit;
    border: none;
    background: none;
    padding: 0;
    margin: 0;
    }

button {
    display: flex;
    align-items: center;
    justify-content: center;
    }

svg {
    width: 10px;
    height: 10px;
    flex: none;
    display: block;
    }

h1, h2, h3, p, ul {
    margin: 0;
    padding: 0;
    font-size: 7px;
    font-weight: normal;
    }

.defs {
    position: absolute;
    width: 0;
    height: 0;
    }

.dd {
    width: 8px;
    height: 5px;
    }

/* Titelleiste */
.titlebar {
    height: 13px;
    display: flex;
    align-items: center;
    background-color: #d3d3d3;
    }
.logo {
    color: #1d5b9b;
    }
.apptitle {
    flex: 1;
    display: flex;
    gap: 12px;
    padding-left: 310px;
    }
.tri {
    width: 7px;
    }
.keyword {
    width: 101px;
    height: 12px;
    align-self: flex-start;
    padding-left: 2px;
    background-color: #fff;
    border: 1px solid #555;
    border-top: none;
    font-style: italic;
    }
.keyword::placeholder, .find input::placeholder {
    color: #555;
    opacity: 1;
    }
.account {
    display: flex;
    align-items: center;
    width: 100px;
    }
.account + .account {
    width: 54px;
    }
.tool {
    width: 14px;
    }
.account + .account .tool {
    width: 19px;
    }
.login {
    width: 28px;
    gap: 3px;
    }
.winbtns {
    display: flex;
    width: 44px;
    justify-content: space-between;
    padding-left: 3px;
    }
.winbtns svg {
    width: 7px;
    height: 7px;
    }

.tabs {
    height: 13px;
    display: flex;
    align-items: center;
    gap: 10px;
    padding-top: 2px;
    background-color: #d3d3d3;
    }
.tabs a {
    color: #333;
    text-decoration: none;
    }
.tabs .wide {
    padding-left: 2px;
    }
.tabs .file {
    color: #f2f2f2;
    margin-right: -6px;
    }
.minrib svg {
    width: 12px;
    height: 8px;
    }

/* Ribbon */
.ribbon {
    height: 53px;
    display: flex;
    background-color: #f5f6f7;
    }
.group {
    display: flex;
    flex-direction: column;
    border-right: 1px solid #e2e3e4;
    }
.group h2 {
    height: 11px;
    text-align: center;
    }
.group .lila {
    background-color: #c8c4e0;
    }
.tools {
    height: 42px;
    display: flex;
    padding-top: 2px;
    }
.ribbon svg {
    width: 18px;
    height: 18px;
    }
.ribbon .small svg, .ribbon .geo svg {
    width: 10px;
    height: 10px;
    }
.ribbon .dd.dd {
    width: 7px;
    height: 5px;
    }
.big {
    flex-direction: column;
    justify-content: flex-start;
    line-height: 9px;
    padding-top: 2px;
    gap: 2px;
    }
.big span {
    line-height: 4px;
    font-size: 5px;
    }
.on {
    background-color: #b9dcf5;
    outline: 1px solid #6fb0de;
    outline-offset: -1px;
    }
.off {
    color: #aaa;
    }
.faint {
    opacity: .6;
    }

.g-select {
    width: 26px;
    }
.g-select .big {
    width: 21px;
    height: 40px;
    margin-left: 1px;
    background-color: #cfe6f8;
    padding-top: 4px;
    }
.g-select svg {
    width: 14px;
    height: 14px;
    }
.g-props {
    width: 47px;
    }
.grid2 {
    display: grid;
    grid-template-columns: 22px 22px;
    grid-template-rows: 20px 20px;
    padding-left: 1px;
    }
.g-clip {
    width: 42px;
    }
.g-clip .big {
    width: 28px;
    }
.small {
    display: grid;
    grid-auto-rows: 13px;
    }
.col1 {
    grid-template-columns: 12px;
    }
.col3 {
    grid-template-columns: 14px 14px 14px;
    }
.g-geo {
    width: 64px;
    }
.geo {
    flex-direction: column;
    padding-top: 8px;
    padding-left: 3px;
    }
.line {
    display: flex;
    align-items: center;
    }
.geo .line {
    height: 14px;
    gap: 2px;
    }
.geo button {
    gap: 3px;
    }
.g-mod {
    width: 134px;
    }
.grid4 {
    display: grid;
    grid-template-columns: 22px 22px 22px 22px;
    grid-template-rows: 20px 20px;
    }
.g-meas {
    width: 29px;
    }
.stack {
    flex-direction: column;
    }
.stack > * {
    height: 20px;
    }
.g-meas .line {
    padding-left: 2px;
    }
.g-new {
    width: 25px;
    }
.g-master {
    width: 162px;
    }
.even {
    justify-content: space-around;
    }
.g-fam {
    width: 62px;
    border: none;
    }
.g-fam .big {
    width: 28px;
    }

/* Schnellzugriff */
.quick {
    height: 15px;
    display: flex;
    align-items: center;
    background-color: #d3d3d3;
    margin-bottom: 13px;
    }
.quick button {
    width: 13px;
    height: 13px;
    }
.quick i {
    width: 4px;
    }
.quick .text {
    font-size: 10px;
    font-weight: bold;
    }
.quick .more {
    width: 8px;
    }
.more svg {
    width: 7px;
    height: 7px;
    }

/* Arbeitsbereich */
.work {
    flex: 1;
    min-height: 0;
    display: flex;
    background-color: #f0f0f0;
    }
.head {
    height: 12px;
    display: flex;
    align-items: center;
    justify-content: space-between;
    background-color: #c4d5e5;
    border-bottom: 1px solid #8a97a4;
    color: #222;
    }
.head svg {
    width: 6px;
    height: 6px;
    margin-right: 2px;
    }

.props {
    width: 126px;
    display: flex;
    flex-direction: column;
    background-color: #fff;
    border-right: 1px solid #999;
    }
.preview {
    height: 41px;
    display: flex;
    align-items: center;
    justify-content: space-between;
    padding-left: 5px;
    background-image: linear-gradient(to right, #e2e2e4, #f6f6f8);
    }
.bigr {
    width: 26px;
    height: 26px;
    color: #999;
    }
.typerow {
    height: 14px;
    display: flex;
    background-color: #f0f0f0;
    }
.combo {
    width: 79px;
    display: flex;
    align-items: center;
    background-color: #e6e6e6;
    border: 1px solid #bbb;
    border-left: none;
    }
.combo select {
    flex: 1;
    appearance: none;
    color: #222;
    }
.combo svg {
    width: 6px;
    height: 6px;
    margin-right: 2px;
    }
.typerow button {
    flex: 1;
    gap: 2px;
    color: #aaa;
    }
.typerow button svg {
    opacity: .5;
    filter: grayscale(1);
    }
.list {
    width: 100%;
    height: 181px;
    table-layout: fixed;
    border-collapse: collapse;
    color: #222;
    }
.list td, .list th {
    padding: 0 0 0 3px;
    height: 11px;
    text-align: left;
    font-weight: normal;
    border-bottom: 1px dashed #ccc;
    }
.list td:nth-of-type(2) {
    padding-left: 1px;
    border-left: 1px dashed #bbb;
    }
.list .cat th {
    padding-left: 0;
    text-indent: -1px;
    background-color: #dcdcdc;
    border-bottom: none;
    }
.cat svg {
    width: 7px;
    height: 8px;
    float: right;
    margin: 1px 2px 0 0;
    }
.list .dim {
    color: #888;
    }
.list .focus.focus {
    border: 1px solid #444;
    }
.list input {
    appearance: none;
    display: block;
    width: 8px;
    height: 8px;
    margin-left: 1px;
    border: 1px solid #777;
    background-color: #fff;
    }
.list input:checked::before {
    content: "✓";
    display: block;
    line-height: 6px;
    }
.foot {
    margin-top: auto;
    height: 14px;
    display: flex;
    align-items: center;
    justify-content: space-between;
    padding-right: 1px;
    background-color: #f2f2f2;
    }
.foot a {
    color: #1c79d0;
    }
.foot button {
    width: 41px;
    height: 12px;
    background-color: #ccc;
    color: #999;
    }

.view {
    flex: 1;
    display: grid;
    grid-template-columns: 1fr 11px;
    grid-template-rows: 1fr 11px;
    margin-left: 3px;
    min-width: 0;
    }
.canvas {
    position: relative;
    background-color: #000;
    min-height: 0;
    }
.drawing {
    width: 100%;
    height: 100%;
    }
.mdi {
    position: absolute;
    top: 5px;
    right: 2px;
    display: flex;
    gap: 3px;
    color: #ddd;
    }
.mdi svg {
    width: 7px;
    height: 7px;
    }
.vscroll, .hscroll {
    display: flex;
    align-items: center;
    justify-content: space-between;
    }
.vscroll {
    flex-direction: column;
    padding: 3px 0 2px;
    }
.vscroll svg, .hscroll svg {
    width: 5px;
    height: 5px;
    }
.vscroll b, .hscroll b {
    width: 9px;
    height: 9px;
    background-color: #ccc;
    }
.flip {
    transform: rotate(180deg);
    }
.left {
    transform: rotate(90deg);
    }
.right {
    transform: rotate(-90deg);
    }
.viewbar {
    display: flex;
    align-items: center;
    background-color: #f2f2f4;
    }
.ratio {
    display: flex;
    gap: 4px;
    width: 43px;
    padding-left: 14px;
    }
.viewbar button {
    width: 12px;
    }
.hscroll {
    flex: 1;
    padding: 0 2px;
    }
.grip {
    background-image: radial-gradient(#bbb 1px, transparent 1px);
    background-size: 3px 3px;
    clip-path: polygon(100% 30%, 100% 100%, 30% 100%);
    }

.browser {
    position: relative;
    width: 139px;
    margin-left: 2px;
    background-color: #fff;
    border-left: 1px solid #888;
    }
.tree {
    height: 158px;
    display: grid;
    grid-auto-rows: 1fr;
    padding-left: 2px;
    list-style: none;
    color: #222;
    }
.tree li {
    display: flex;
    align-items: center;
    gap: 3px;
    }
.tree .box {
    width: 6px;
    height: 7px;
    }
.tree s {
    width: 6px;
    border-top: 1px dotted #aaa;
    margin-left: -2px;
    }
.tree .l2 {
    padding-left: 11px;
    gap: 2px;
    }
.tree .l3 {
    margin-left: 25px;
    border-left: 1px dotted #aaa;
    }
.tree .l3 s {
    margin: 0;
    }
.tree .leaf {
    padding-left: 9px;
    }
.tree strong {
    background-color: #ddd;
    }
.arrow {
    position: absolute;
    left: 62px;
    top: 119px;
    width: 34px;
    height: 26px;
    }
.ime {
    position: absolute;
    right: 13px;
    bottom: 70px;
    height: 13px;
    width: 117px;
    display: flex;
    align-items: center;
    justify-content: space-between;
    padding-right: 2px;
    color: #2579c9;
    font-size: 8px;
    font-weight: bold;
    border: 1px solid #e2e6ee;
    border-left: none;
    }
.ime svg {
    width: 9px;
    height: 9px;
    }
.ime .s {
    width: 16px;
    height: 16px;
    }
.meter {
    position: absolute;
    right: 0;
    bottom: 12px;
    width: 4px;
    height: 29px;
    border: 1px solid #555;
    border-right: none;
    border-radius: 2px 0 0 2px;
    background-image: linear-gradient(#fff 50%, #ee6a30 50%);
    }

.status {
    height: 13px;
    display: flex;
    align-items: center;
    background-color: #d6d6d6;
    padding-right: 34px;
    color: #222;
    font-family: Roboto, "Noto Sans CJK SC", sans-serif;
    }
.status p {
    flex: 1;
    text-indent: -2px;
    }
.status button {
    width: 15px;
    }
.status .count {
    width: 18px;
    }

/* Taskleiste */
.taskbar {
    height: 20px;
    display: flex;
    background-color: #2d2825;
    color: #fff;
    }
.start {
    width: 24px;
    }
.find {
    width: 193px;
    display: flex;
    align-items: center;
    gap: 5px;
    margin-right: 2px;
    padding-left: 7px;
    background-color: #f3f3f3;
    color: #333;
    font-size: 8px;
    }
.find input {
    flex: 1;
    }
.app {
    width: 28px;
    }
.app svg {
    width: 13px;
    height: 13px;
    }
.active {
    background-color: #55524f;
    }
.app .tile {
    background-color: #e8f1f9;
    color: #1d5b9b;
    padding: 1px;
    }
.tray {
    margin-left: auto;
    display: flex;
    align-items: center;
    gap: 4px;
    padding-right: 9px;
    }
.tray .sg {
    margin-right: 10px;
    }
.battery {
    width: 22px;
    height: 11px;
    margin-left: -2px;
    line-height: 9px;
    text-align: center;
    background-color: #1b9c43;
    border: 1px solid #fff;
    }
.clock {
    width: 40px;
    text-align: center;
    }
.tray .msg {
    width: 13px;
    height: 12px;
    margin-left: 3px;
    }
```
